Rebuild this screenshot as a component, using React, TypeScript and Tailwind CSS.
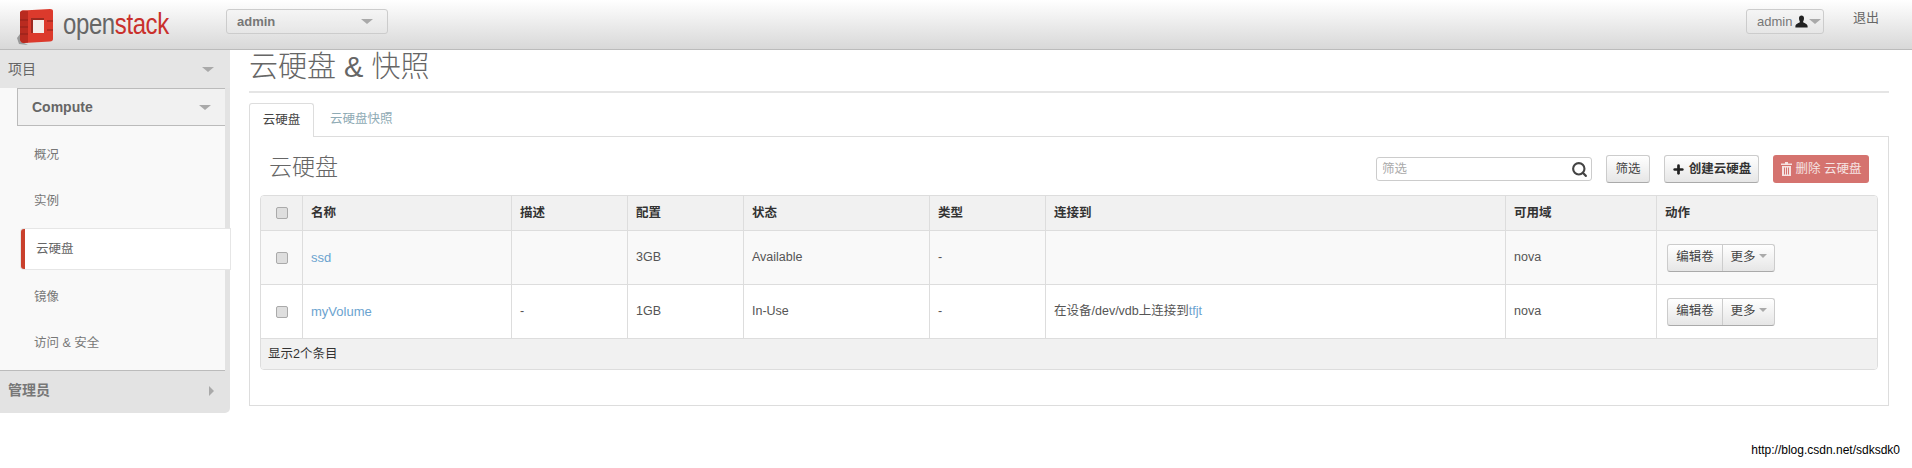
import React from "react";
import { Search, Plus } from "lucide-react";

const FONT = "font-['Liberation_Sans','Noto_Sans_CJK_SC',sans-serif]";

const Caret = ({ className = "" }: { className?: string }) => (
  <span
    className={`inline-block w-0 h-0 border-x-[6px] border-x-transparent border-t-[5px] border-t-[#a9a9a9] ${className}`}
  />
);

const Logo = () => (
  <svg width="37" height="38" viewBox="0 0 37 38">
    <path d="M0 30 L3 26 L3 33 L11 37 L2 36 Z" fill="#999" />
    <path
      d="M3 5 Q3 3 6 2.5 L33 1 Q36 1 36 3 L36 31 Q36 33 33 33.5 L7 35 Q4 35 3 32 Z"
      fill="#dc3a2c"
    />
    <path d="M3 5 L3 32 Q4 35 7 35 L11 34.5 L11 3 L6 2.5 Q3 3 3 5 Z" fill="#b92b20" />
    <path d="M3 12 H11 M3 19 H11 M3 26 H11 M30 13 H36 M30 22 H36" stroke="#8f2018" strokeWidth="1" />
    <rect x="14" y="10" width="13" height="15" fill="#9c2a20" />
    <rect x="16" y="12" width="11" height="13" fill="#f4eeea" />
  </svg>
);

const UserIcon = () => (
  <svg width="13" height="13" viewBox="0 0 13 13">
    <path
      d="M4 3.2 C4 1.4 5 .4 6.5 .4 S9 1.4 9 3.2 C9 5 8.3 6.4 7.9 7 C8.6 8 12.4 8.6 12.6 11 L12.6 12.6 L.4 12.6 L.4 11 C.6 8.6 4.4 8 5.1 7 C4.7 6.4 4 5 4 3.2 Z"
      fill="#222"
    />
  </svg>
);

const TrashIcon = () => (
  <svg width="11" height="14" viewBox="0 0 11 14" fill="#f5e3e2">
    <path d="M4 0 H7 V1.5 H11 V3 H0 V1.5 H4 Z" />
    <path d="M1 4 H10 V14 H1 Z M3 5.5 V12.5 H4 V5.5 Z M5 5.5 V12.5 H6 V5.5 Z M7 5.5 V12.5 H8 V5.5 Z" fillRule="evenodd" />
  </svg>
);

const columns = [
  { label: "名称", width: "w-[209px]" },
  { label: "描述", width: "w-[116px]" },
  { label: "配置", width: "w-[116px]" },
  { label: "状态", width: "w-[186px]" },
  { label: "类型", width: "w-[116px]" },
  { label: "连接到", width: "w-[460px]" },
  { label: "可用域", width: "w-[151px]" },
];

const rows = [
  { name: "ssd", desc: "", size: "3GB", status: "Available", type: "-", attached: false, zone: "nova" },
  { name: "myVolume", desc: "-", size: "1GB", status: "In-Use", type: "-", attached: true, zone: "nova" },
];

const menu = ["概况", "实例", "云硬盘", "镜像", "访问 & 安全"];

const Checkbox = () => (
  <input
    type="checkbox"
    readOnly
    className="block mx-auto appearance-none w-[12px] h-[12px] rounded-[2px] border border-[#aaa] bg-[#dedede]"
  />
);

const Sidebar = () => (
  <aside className="w-[230px] h-[363px] bg-[#e3e3e3] rounded-br-[5px] shrink-0 flex flex-col">
    <div className="h-[38px] flex items-center justify-between pl-[8px] pr-[14px] bg-[#e5e5e5] text-[14px] text-[#666]">
      <span>项目</span>
      <Caret className="mr-[2px]" />
    </div>
    <div className="w-[225px] h-[282px] bg-[#f9f9f9] flex flex-col">
      <div className="ml-[17px] h-[38px] flex items-center justify-between pl-[14px] pr-[14px] bg-[#f1f1f1] border border-r-0 border-[#bbb] text-[14px] font-bold text-[#666]">
        <span>Compute</span>
        <Caret />
      </div>
      <ul className="flex flex-col pt-[6px]">
        {menu.map((item) =>
          item === "云硬盘" ? (
            <li
              key={item}
              className="ml-[21px] w-[209px] h-[40px] my-[5px] z-10 flex items-center pl-[11px] bg-white border-l-[4px] border-l-[#c9402c] rounded-l-[3px] text-[12.5px] text-[#666] shadow-[0_0_0_1px_#e6e6e6]"
            >
              {item}
            </li>
          ) : (
            <li key={item} className="h-[46px] flex items-center pl-[34px] text-[12.5px] text-[#777]">
              {item}
            </li>
          ),
        )}
      </ul>
    </div>
    <div className="w-[225px] flex-1 flex items-center justify-between pl-[8px] pr-[11px] pb-[3px] border-t border-[#bbb] text-[14px] font-bold text-[#777]">
      <span>管理员</span>
      <span className="w-0 h-0 border-y-[5px] border-y-transparent border-l-[5px] border-l-[#a9a9a9]" />
    </div>
  </aside>
);

const VolumeTable = () => (
  <div className="border border-[#ddd] rounded-[4px] overflow-hidden">
    <table className="w-full table-fixed border-separate border-spacing-0 text-[12.5px] text-[#555]">
      <thead>
        <tr className="h-[34px] bg-[#f1f1f1]">
          <th className="w-[41px]">
            <Checkbox />
          </th>
          {columns.map((col) => (
            <th
              key={col.label}
              className={`border-l border-[#ddd] px-[8px] text-left font-bold text-[#333] ${col.width}`}
            >
              {col.label}
            </th>
          ))}
          <th className="border-l border-[#ddd] px-[8px] text-left font-bold text-[#333]">动作</th>
        </tr>
      </thead>
      <tbody>
        {rows.map((row, index) => (
          <tr key={row.name} className={`h-[54px] ${index === 0 ? "bg-[#f9f9f9]" : "bg-white"}`}>
            <td className="border-t border-[#ddd]">
              <Checkbox />
            </td>
            <td className="border-t border-l border-[#ddd] px-[8px] text-[13px] text-[#6ba3cf]">{row.name}</td>
            <td className="border-t border-l border-[#ddd] px-[8px]">{row.desc}</td>
            <td className="border-t border-l border-[#ddd] px-[8px]">{row.size}</td>
            <td className="border-t border-l border-[#ddd] px-[8px]">{row.status}</td>
            <td className="border-t border-l border-[#ddd] px-[8px]">{row.type}</td>
            <td className="border-t border-l border-[#ddd] px-[8px]">
              {row.attached && (
                <span>
                  在设备/dev/vdb上连接到<span className="text-[#6ba3cf]">tfjt</span>
                </span>
              )}
            </td>
            <td className="border-t border-l border-[#ddd] px-[8px]">{row.zone}</td>
            <td className="border-t border-l border-[#ddd] px-[10px]">
              <div className="flex w-[108px] h-[28px] rounded-[3px] border border-[#ccc] border-b-[#aaa] bg-linear-to-b from-white to-[#e6e6e6] text-[#444]">
                <span className="w-[55px] flex items-center justify-center border-r border-[#ccc]">编辑卷</span>
                <span className="flex-1 flex items-center justify-center gap-[3px]">
                  更多
                  <span className="w-0 h-0 border-x-[4px] border-x-transparent border-t-[4px] border-t-[#aaa] -mt-[3px]" />
                </span>
              </div>
            </td>
          </tr>
        ))}
        <tr className="h-[31px] bg-[#f1f1f1]">
          <td colSpan={9} className="border-t border-[#ddd] px-[7px] text-[#333]">
            显示2个条目
          </td>
        </tr>
      </tbody>
    </table>
  </div>
);

const App = () => {
  return (
    <div className={`relative w-full h-[468px] overflow-hidden bg-white ${FONT}`}>
      <header className="h-[50px] flex items-start border-b border-[#bbb] bg-linear-to-b from-white to-[#d8d8d8]">
        <div className="w-[226px] h-full flex items-start pl-[17px] pt-[8px] gap-[9px]">
          <Logo />
          <span className="origin-left scale-x-[0.8] text-[30px] leading-[32px] text-[#666] tracking-[-0.5px]">
            open<span className="text-[#c9302c]">stack</span>
          </span>
        </div>
        <div className="mt-[9px] w-[162px] h-[25px] flex items-center justify-between pl-[10px] pr-[14px] rounded-[3px] border border-[#ccc] bg-linear-to-b from-[#f5f5f5] to-[#e6e6e6] text-[13px] font-bold text-[#777]">
          <span>admin</span>
          <Caret />
        </div>
        <div className="ml-auto mt-[9px] w-[78px] h-[25px] flex items-center pl-[10px] rounded-[3px] border border-[#ccc] bg-linear-to-b from-[#f5f5f5] to-[#e6e6e6] text-[13px] text-[#777]">
          <span className="mr-[3px]">admin</span>
          <UserIcon />
          <Caret className="ml-[1px]" />
        </div>
        <span className="mt-[8px] ml-[29px] mr-[33px] text-[13px] text-[#666]">退出</span>
      </header>

      <div className="flex">
        <Sidebar />
        <main className="flex-1 pl-[19px] pr-[23px]">
          <div className="h-[43px] pb-[7px] flex items-center border-b-2 border-[#e5e5e5] text-[29px] font-light text-[#666] leading-none">
            云硬盘 &amp; 快照
          </div>
          <div className="mt-[10px] flex text-[12.5px]">
            <span className="w-[65px] h-[34px] -mb-px z-10 flex items-center justify-center bg-white border border-b-0 border-[#ddd] rounded-t-[3px] text-[#444]">
              云硬盘
            </span>
            <span className="ml-[16px] h-[33px] flex items-center text-[#8fabb5]">云硬盘快照</span>
          </div>
          <section className="border border-[#ddd] px-[10px] pt-[18px] pb-[35px]">
            <div className="h-[28px] mb-[12px] flex items-center pr-[9px]">
              <h2 className="ml-[9px] -mt-[4px] text-[23px] text-[#666] font-light">云硬盘</h2>
              <div className="ml-auto w-[216px] h-[24px] flex items-center justify-between pl-[5px] pr-[3px] rounded-[3px] border border-[#ccc] bg-white text-[12.5px] text-[#aaa]">
                <span>筛选</span>
                <Search size={17} strokeWidth={3} className="text-[#444]" />
              </div>
              <button className="ml-[14px] w-[44px] h-[28px] rounded-[3px] border border-[#ccc] border-b-[#aaa] bg-linear-to-b from-white to-[#e6e6e6] text-[12.5px] text-[#444]">
                筛选
              </button>
              <button className="ml-[14px] w-[95px] h-[28px] flex items-center justify-center gap-[4px] rounded-[3px] border border-[#ccc] border-b-[#aaa] bg-linear-to-b from-white to-[#e6e6e6] text-[12.5px] font-bold text-[#333]">
                <Plus size={13} strokeWidth={5} className="text-[#222]" />
                创建云硬盘
              </button>
              <button className="ml-[14px] w-[96px] h-[28px] flex items-center justify-center gap-[4px] rounded-[3px] bg-[#d5736f] text-[12.5px] text-[#f5e3e2]">
                <TrashIcon />
                删除 云硬盘
              </button>
            </div>
            <VolumeTable />
          </section>
        </main>
      </div>

      <span className="absolute right-[12px] top-[441px] text-[12px] text-black">http://blog.csdn.net/sdksdk0</span>
    </div>
  );
};

export default App;
